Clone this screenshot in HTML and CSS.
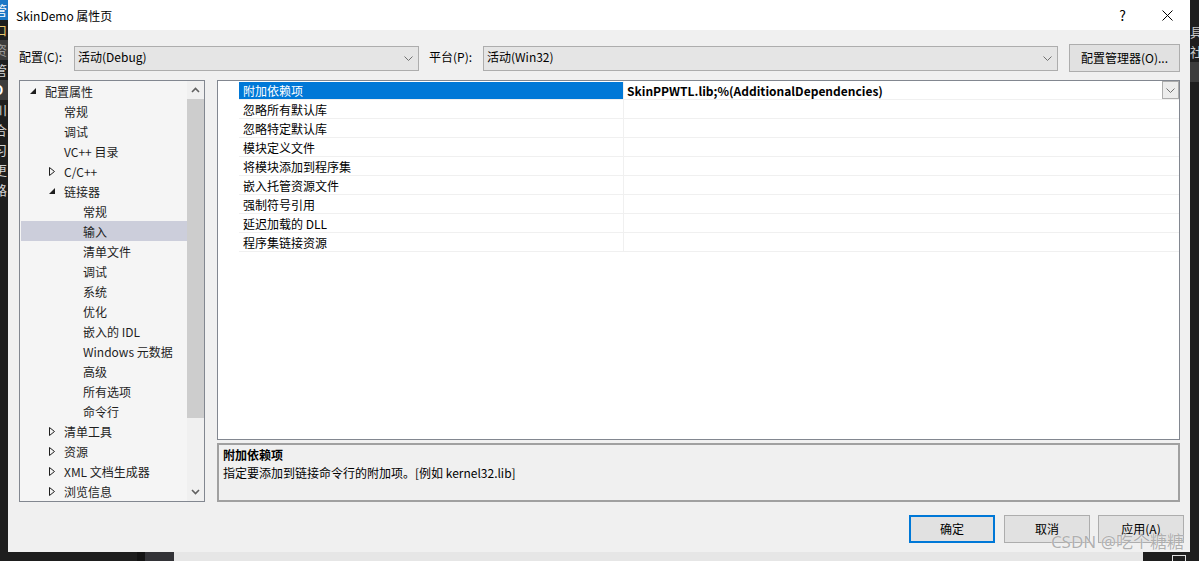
FILE: index.html
```html
<!DOCTYPE html>
<html lang="zh-CN">
<head>
    <meta charset="UTF-8">
    <title>SkinDemo 属性页</title>
    <link rel="stylesheet" href="styles.css">
</head>
<body>

<div class="desktop">
    <div class="ide-left">
        <div class="ide-chars">
            <span class="ide-hl">管</span>
            <span class="ide-yellow">口</span>
            <span class="ide-band">资</span>
            <span>管</span>
            <span class="ide-band ide-bold">D</span>
            <span>川</span>
            <span>合</span>
            <span>习</span>
            <span>更</span>
            <span>路</span>
        </div>
    </div>

    <div class="dialog">
        <div class="titlebar">
            <span class="title">SkinDemo 属性页</span>
            <span class="title-btn">?</span>
            <span class="title-btn">
                <svg width="11" height="11" viewBox="0 0 11 11"><path d="M0.5 0.5L10.5 10.5M10.5 0.5L0.5 10.5" stroke="#000" stroke-width="1"/></svg>
            </span>
        </div>

        <div class="config-row">
            <span class="lbl">配置(C):</span>
            <div class="select sel-config">
                <span>活动(Debug)</span>
                <svg class="chev" width="9" height="5" viewBox="0 0 9 5"><path d="M0.5 0.5L4.5 4.5L8.5 0.5" fill="none" stroke="#707070"/></svg>
            </div>
            <span class="lbl lbl-platform">平台(P):</span>
            <div class="select sel-platform">
                <span>活动(Win32)</span>
                <svg class="chev" width="9" height="5" viewBox="0 0 9 5"><path d="M0.5 0.5L4.5 4.5L8.5 0.5" fill="none" stroke="#707070"/></svg>
            </div>
            <button class="btn btn-manager">配置管理器(O)...</button>
        </div>

        <div class="main">
            <div class="tree">
                <div class="tree-items">
                    <div class="tree-row lv0"><span class="toggle"><svg width="6" height="6" viewBox="0 0 6 6"><path d="M6 0V6H0Z" fill="#1e1e1e"/></svg></span>配置属性</div>
                    <div class="tree-row lv1"><span class="toggle"></span>常规</div>
                    <div class="tree-row lv1"><span class="toggle"></span>调试</div>
                    <div class="tree-row lv1"><span class="toggle"></span>VC++ 目录</div>
                    <div class="tree-row lv1"><span class="toggle"><svg width="6" height="9" viewBox="0 0 6 9"><path d="M0.5 0.5L5.5 4.5L0.5 8.5Z" fill="none" stroke="#1e1e1e"/></svg></span>C/C++</div>
                    <div class="tree-row lv1"><span class="toggle"><svg width="6" height="6" viewBox="0 0 6 6"><path d="M6 0V6H0Z" fill="#1e1e1e"/></svg></span>链接器</div>
                    <div class="tree-row lv2"><span class="toggle"></span>常规</div>
                    <div class="tree-row lv2 selected"><span class="toggle"></span>输入</div>
                    <div class="tree-row lv2"><span class="toggle"></span>清单文件</div>
                    <div class="tree-row lv2"><span class="toggle"></span>调试</div>
                    <div class="tree-row lv2"><span class="toggle"></span>系统</div>
                    <div class="tree-row lv2"><span class="toggle"></span>优化</div>
                    <div class="tree-row lv2"><span class="toggle"></span>嵌入的 IDL</div>
                    <div class="tree-row lv2"><span class="toggle"></span>Windows 元数据</div>
                    <div class="tree-row lv2"><span class="toggle"></span>高级</div>
                    <div class="tree-row lv2"><span class="toggle"></span>所有选项</div>
                    <div class="tree-row lv2"><span class="toggle"></span>命令行</div>
                    <div class="tree-row lv1"><span class="toggle"><svg width="6" height="9" viewBox="0 0 6 9"><path d="M0.5 0.5L5.5 4.5L0.5 8.5Z" fill="none" stroke="#1e1e1e"/></svg></span>清单工具</div>
                    <div class="tree-row lv1"><span class="toggle"><svg width="6" height="9" viewBox="0 0 6 9"><path d="M0.5 0.5L5.5 4.5L0.5 8.5Z" fill="none" stroke="#1e1e1e"/></svg></span>资源</div>
                    <div class="tree-row lv1"><span class="toggle"><svg width="6" height="9" viewBox="0 0 6 9"><path d="M0.5 0.5L5.5 4.5L0.5 8.5Z" fill="none" stroke="#1e1e1e"/></svg></span>XML 文档生成器</div>
                    <div class="tree-row lv1"><span class="toggle"><svg width="6" height="9" viewBox="0 0 6 9"><path d="M0.5 0.5L5.5 4.5L0.5 8.5Z" fill="none" stroke="#1e1e1e"/></svg></span>浏览信息</div>
                </div>
                <div class="scrollbar">
                    <div class="sb-arrow">
                        <svg width="9" height="6" viewBox="0 0 9 6"><path d="M1 5L4.5 1.5L8 5" fill="none" stroke="#606060" stroke-width="1.6"/></svg>
                    </div>
                    <div class="sb-thumb"></div>
                    <div class="sb-space"></div>
                    <div class="sb-arrow">
                        <svg width="9" height="6" viewBox="0 0 9 6"><path d="M1 1L4.5 4.5L8 1" fill="none" stroke="#606060" stroke-width="1.6"/></svg>
                    </div>
                </div>
            </div>

            <div class="right">
                <div class="grid">
                    <div class="grid-row selected">
                        <div class="gutter"></div>
                        <div class="name">附加依赖项</div>
                        <div class="value">
                            <span>SkinPPWTL.lib;%(AdditionalDependencies)</span>
                            <span class="drop">
                                <svg width="9" height="5" viewBox="0 0 9 5"><path d="M0.5 0.5L4.5 4.5L8.5 0.5" fill="none" stroke="#707070"/></svg>
                            </span>
                        </div>
                    </div>
                    <div class="grid-row"><div class="gutter"></div><div class="name">忽略所有默认库</div><div class="value"></div></div>
                    <div class="grid-row"><div class="gutter"></div><div class="name">忽略特定默认库</div><div class="value"></div></div>
                    <div class="grid-row"><div class="gutter"></div><div class="name">模块定义文件</div><div class="value"></div></div>
                    <div class="grid-row"><div class="gutter"></div><div class="name">将模块添加到程序集</div><div class="value"></div></div>
                    <div class="grid-row"><div class="gutter"></div><div class="name">嵌入托管资源文件</div><div class="value"></div></div>
                    <div class="grid-row"><div class="gutter"></div><div class="name">强制符号引用</div><div class="value"></div></div>
                    <div class="grid-row"><div class="gutter"></div><div class="name">延迟加载的 DLL</div><div class="value"></div></div>
                    <div class="grid-row"><div class="gutter"></div><div class="name">程序集链接资源</div><div class="value"></div></div>
                </div>
                <div class="desc">
                    <div class="desc-title">附加依赖项</div>
                    <div>指定要添加到链接命令行的附加项。[例如 kernel32.lib]</div>
                </div>
            </div>
        </div>

        <div class="footer">
            <button class="btn btn-default">确定</button>
            <button class="btn btn-cancel">取消</button>
            <button class="btn">应用(A)</button>
        </div>

        <div class="watermark">CSDN @吃个糖糖</div>
    </div>

    <div class="ide-right">
        <div class="ide-chars-right">
            <span>具</span>
            <span>社</span>
            <span class="ide-band"></span>
        </div>
    </div>
</div>

<div class="taskbar">
    <div class="tb-a"></div>
    <div class="tb-b"></div>
    <div class="tb-c"></div>
    <div class="tb-d"></div>
    <div class="tb-e"><span class="tb-box"></span></div>
</div>

</body>
</html>
```

FILE: styles.css
```css
* {
    box-sizing: border-box;
}
body {
    margin: 0;
    background-color: #1e1e1e;
    font-family: "Noto Sans CJK SC", "Noto Sans", sans-serif;
    font-size: 12px;
    color: #000;
    overflow: hidden;
}
.desktop {
    display: flex;
    height: 552px;
}

/* IDE behind the dialog */
.ide-left {
    width: 8px;
    overflow: hidden;
    background-color: #1e1e1e;
}
.ide-chars {
    display: flex;
    flex-direction: column;
    margin-left: -6px;
    color: #d0d0d0;
    font-size: 13px;
    line-height: 20px;
}
.ide-chars span {
    height: 20px;
}
.ide-hl {
    background-color: #1c78c6;
    color: #fff;
}
.ide-yellow {
    color: #e8c46a;
}
.ide-band {
    background-color: #3c3c3c;
    color: #9a9a9a;
}
.ide-bold {
    color: #fff;
    font-weight: bold;
}
.ide-right {
    flex: 1;
    overflow: hidden;
    background-color: #1e1e1e;
}
.ide-chars-right {
    display: flex;
    flex-direction: column;
    padding-top: 22px;
    color: #c8c8c8;
    font-size: 13px;
    line-height: 20px;
}
.ide-chars-right span {
    height: 20px;
}
.taskbar {
    display: flex;
    height: 9px;
}
.tb-a {
    width: 137px;
    background-color: #1e1e1e;
}
.tb-b {
    width: 8px;
    background-color: #141414;
}
.tb-c {
    width: 29px;
    background-color: #333337;
}
.tb-d {
    width: 969px;
    background-color: #e6e6e6;
}
.tb-e {
    flex: 1;
    background-color: #1e1e1e;
    padding: 3px 0 0 29px;
}
.tb-box {
    display: block;
    width: 14px;
    height: 8px;
    border: 1px solid #e0e0e0;
    border-bottom: none;
}

/* dialog */
.dialog {
    width: 1182px;
    background-color: #f0f0f0;
    display: flex;
    flex-direction: column;
    position: relative;
}
.titlebar {
    height: 30px;
    background-color: #fff;
    display: flex;
    align-items: center;
    padding-left: 8px;
}
.title {
    flex: 1;
}
.title-btn {
    width: 45px;
    height: 30px;
    display: flex;
    align-items: center;
    justify-content: center;
    font-size: 14px;
}

.config-row {
    display: flex;
    align-items: center;
    height: 28px;
    margin-top: 14px;
    padding: 0 10px 0 11px;
}
.lbl {
    width: 55px;
    padding-bottom: 3px;
}
.lbl-platform {
    width: 54px;
    margin-left: 10px;
}
.select {
    height: 25px;
    border: 1px solid #adadad;
    background-color: #e5e5e5;
    display: flex;
    align-items: center;
    justify-content: space-between;
    padding: 0 5px 3px 3px;
}
.select .chev {
    margin-top: 3px;
}
.sel-config {
    width: 345px;
}
.sel-platform {
    width: 575px;
}
.btn {
    font: inherit;
    color: #000;
    background-color: #e1e1e1;
    border: 1px solid #adadad;
    padding: 0;
}
.btn-manager {
    margin-left: 11px;
    width: 111px;
    height: 28px;
    padding-bottom: 2px;
}

.main {
    display: flex;
    gap: 12px;
    height: 422px;
    margin-top: 8px;
    padding: 0 10px 0 11px;
}
.tree {
    width: 186px;
    border: 1px solid #828790;
    background-color: #f5f5f5;
    display: flex;
}
.tree-items {
    flex: 1;
    padding-left: 1px;
}
.tree-row {
    height: 20px;
    display: flex;
    align-items: center;
    color: #1e1e1e;
    white-space: nowrap;
}
.tree-row.lv0 {
    padding-left: 9px;
}
.tree-row.lv1 {
    padding-left: 28px;
}
.tree-row.lv2 {
    padding-left: 47px;
}
.tree-row.selected {
    background-color: #cccedb;
}
.toggle {
    width: 15px;
    height: 20px;
    display: flex;
    align-items: center;
}
.scrollbar {
    width: 17px;
    background-color: #f0f0f0;
    display: flex;
    flex-direction: column;
}
.sb-arrow {
    height: 18px;
    display: flex;
    align-items: center;
    justify-content: center;
}
.sb-thumb {
    height: 319px;
    background-color: #cdcdcd;
}
.sb-space {
    flex: 1;
}

.right {
    flex: 1;
    display: flex;
    flex-direction: column;
    gap: 3px;
}
.grid {
    height: 360px;
    border: 1px solid #828790;
    background-color: #fff;
}
.grid-row {
    display: flex;
    height: 19px;
}
.gutter {
    width: 21px;
}
.name {
    width: 385px;
    border-right: 1px solid #f0f0f0;
    border-bottom: 1px solid #f0f0f0;
    padding-left: 4px;
    line-height: 19px;
}
.value {
    flex: 1;
    display: flex;
    justify-content: space-between;
    border-bottom: 1px solid #f0f0f0;
    padding-left: 3px;
    font-weight: bold;
    line-height: 19px;
}
.grid-row.selected .name {
    background-color: #0078d7;
    color: #fff;
    border-top: 1px solid #fff;
    line-height: 17px;
}
.drop {
    width: 17px;
    height: 18px;
    border: 1px solid #adadad;
    background-color: #ececec;
    display: flex;
    align-items: center;
    justify-content: center;
}
.desc {
    flex: 1;
    border: 2px solid #a0a0a0;
    padding: 1px 4px;
    line-height: 18px;
}
.desc-title {
    font-weight: bold;
}

.footer {
    display: flex;
    justify-content: flex-end;
    margin-top: 13px;
    padding-right: 6px;
}
.footer .btn {
    width: 86px;
    height: 28px;
    margin-left: 8px;
    padding-bottom: 1px;
}
.footer .btn-cancel {
    margin-left: 9px;
}
.btn-default {
    border: 2px solid #0078d7;
}
.watermark {
    position: absolute;
    right: 6px;
    bottom: 0;
    font-family: "Noto Sans", "Noto Sans CJK SC", sans-serif;
    font-size: 17px;
    line-height: 21px;
    color: rgba(150, 150, 150, 0.75);
    text-shadow: 0 0 1px #fff;
}
```
